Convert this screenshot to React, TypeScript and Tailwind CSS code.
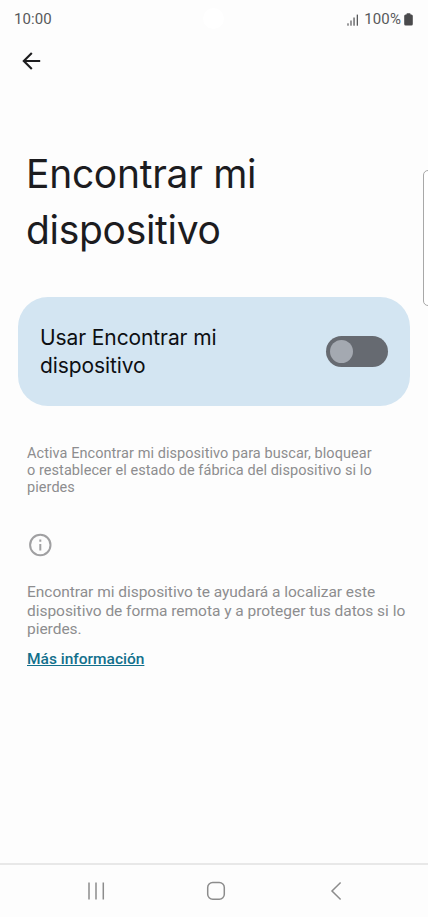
import { useState } from "react";

const SignalIcon = () => (
  <svg width="12" height="12" viewBox="0 0 12 12" fill="#58595b">
    <rect x="0.4" y="9.3" width="1.2" height="2.4" />
    <rect x="3.4" y="6.5" width="1.2" height="5.2" />
    <rect x="6.4" y="3.5" width="1.3" height="8.2" />
    <rect x="9.7" y="0.6" width="1.3" height="11.1" />
  </svg>
);

const BatteryIcon = () => (
  <svg width="9" height="13" viewBox="0 0 9 13" fill="#4a4a4c">
    <rect x="2.5" y="0.3" width="4" height="3" rx="0.8" />
    <rect x="0.2" y="1.4" width="8.6" height="11.2" rx="1.5" />
  </svg>
);

const StatusBar = () => (
  <div className="relative flex h-[38px] items-center justify-between pl-[14px] pr-[15px] pt-px text-[15px] text-[#58595b]">
    <span className="tracking-[0.1px]">10:00</span>
    <div className="absolute left-[203px] top-[8px] h-[21px] w-[21px] rounded-full bg-white" />
    <div className="flex items-center">
      <SignalIcon />
      <span className="ml-[5px] mr-[3px] tracking-[0.1px]">100%</span>
      <BatteryIcon />
    </div>
  </div>
);

const NavigationBar = () => (
  <nav className="flex h-[54px] items-center border-t-2 border-[#e8e8e8] pl-[87px]">
    <svg width="18" height="18" viewBox="0 0 18 18" stroke="#8c8c8c" strokeWidth="1.5">
      <path d="M2 0.5v17M9 0.5v17M16.3 0.5v17" />
    </svg>
    <svg className="ml-[101px]" width="20" height="20" viewBox="0 0 20 20" fill="none" stroke="#8c8c8c" strokeWidth="1.5">
      <rect x="1.7" y="1.6" width="16.6" height="16.6" rx="5" />
    </svg>
    <svg className="ml-[104px]" width="12" height="20" viewBox="0 0 12 20" fill="none" stroke="#8c8c8c" strokeWidth="1.5">
      <path d="M10.6 1.5L2 10l8.6 8.5" />
    </svg>
  </nav>
);

export default function App() {
  const [enabled, setEnabled] = useState(false);

  return (
    <div className="relative flex h-[917px] w-[428px] flex-col overflow-hidden bg-[#fdfdfd] font-['Roboto',sans-serif]">
      <StatusBar />

      <header className="flex h-[46px] items-center pl-[22px]">
        <button aria-label="Atrás">
          <svg width="19" height="18" viewBox="0 0 19 18" fill="none" stroke="#1d1d1f" strokeWidth="2.1">
            <path d="M18.2 9H1.8M9.8 1L1.8 9l8 8" />
          </svg>
        </button>
      </header>

      <main className="flex-1">
        <h1 className="ml-[26px] mt-[62px] whitespace-nowrap font-['Inter',sans-serif] text-[39px] font-normal leading-[56px] tracking-[-0.3px] text-[#1c1c1f]">
          Encontrar mi
          <br />
          dispositivo
        </h1>

        <section className="mx-[18px] mt-[39px] flex h-[109px] items-center justify-between rounded-[30px] bg-[#d3e5f2] px-[22px]">
          <p className="font-['Inter',sans-serif] text-[21px] font-normal leading-7 tracking-[-0.1px] text-[#0d0f12]">
            Usar Encontrar mi
            <br />
            dispositivo
          </p>
          <button
            role="switch"
            aria-checked={enabled}
            aria-label="Usar Encontrar mi dispositivo"
            onClick={() => setEnabled(!enabled)}
            className={`flex h-[31px] w-[62px] items-center rounded-full bg-[#666a71] px-1 ${enabled ? "justify-end" : "justify-start"}`}
          >
            <span className="h-[23px] w-[23px] rounded-full bg-[#a4a9b1]" />
          </button>
        </section>

        <p className="ml-[27px] mt-[39px] whitespace-nowrap text-[14.5px] leading-[17px] tracking-[0.06px] text-[#8d8d8f]">
          Activa Encontrar mi dispositivo para buscar, bloquear
          <br />
          o restablecer el estado de fábrica del dispositivo si lo
          <br />
          pierdes
        </p>

        <svg className="ml-[28px] mt-[37px]" width="24" height="24" viewBox="0 0 24 24" fill="none" stroke="#a0a0a2" strokeWidth="2">
          <circle cx="12.3" cy="12" r="10.2" />
          <path d="M12.3 11v6.5M12.3 6.5v2.2" />
        </svg>

        <p className="ml-[27px] mt-[26px] whitespace-nowrap text-[15.5px] leading-[18.5px] tracking-[-0.03px] text-[#8d8d8f]">
          Encontrar mi dispositivo te ayudará a localizar este
          <br />
          dispositivo de forma remota y a proteger tus datos si lo
          <br />
          pierdes.
        </p>
        <a href="#" className="ml-[27px] mt-[11px] block w-fit text-[15.5px] font-medium leading-[18px] text-[#12708c] underline">
          Más información
        </a>
      </main>

      {/* Edge panel handle */}
      <div className="absolute left-[423px] top-[170px] h-[136px] w-[10px] rounded-[5px] border border-[#a8a8a8] bg-white" />

      <NavigationBar />
    </div>
  );
}
